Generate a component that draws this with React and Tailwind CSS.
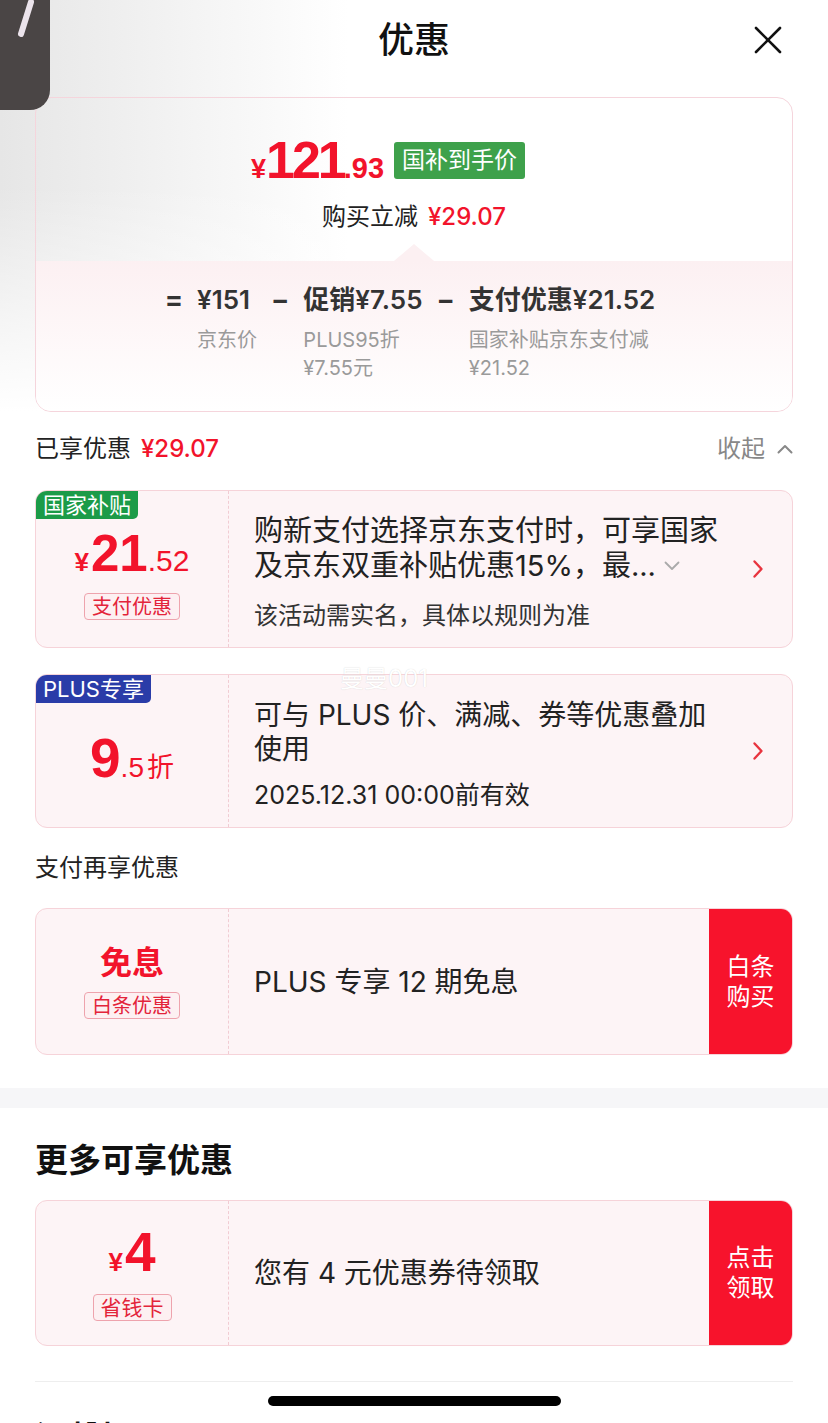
import React from "react";

const RED = "text-[#f2132b]";

function RightChevron() {
  return (
    <svg width="12" height="20" viewBox="0 0 12 20" className="shrink-0">
      <polyline points="2.5,2.5 9.5,10 2.5,17.5" fill="none" stroke="#e8343f" strokeWidth="2.4" strokeLinecap="round" strokeLinejoin="round" />
    </svg>
  );
}

function Tag({ children, className = "" }) {
  return (
    <span className={"inline-flex items-center justify-center h-[27px] px-[7px] rounded-[4px] border border-[#eea3ad] bg-[#fdf0f2] text-[20px] leading-none text-[#e3243a] " + className}>
      {children}
    </span>
  );
}

export default function App() {
  return (
    <div className="relative w-[828px] min-h-[1423px] overflow-hidden bg-white font-['Inter','Noto_Sans_CJK_SC',sans-serif] text-[#1a1a1a]">
      {/* top area with soft gradient */}
      <div className="bg-[linear-gradient(to_bottom,rgba(255,255,255,0)_45%,#ffffff_100%),linear-gradient(to_right,#e6e6e6,#ffffff_42%)]">
        <div className="h-[80px] flex items-center justify-between px-[46px]">
          <div className="w-[28px]" />
          <div className="text-[36px] font-medium leading-none text-[#111]">优惠</div>
          <svg width="28" height="28" viewBox="0 0 28 28">
            <line x1="2" y1="2" x2="26" y2="26" stroke="#111" strokeWidth="2.6" strokeLinecap="round" />
            <line x1="26" y1="2" x2="2" y2="26" stroke="#111" strokeWidth="2.6" strokeLinecap="round" />
          </svg>
        </div>

        {/* summary card */}
        <div className="mx-[35px] mt-[17px] rounded-[16px] border border-[#f5d5dc] overflow-hidden">
          <div className="relative h-[163px] flex flex-col items-center pt-[36px]">
            <div className="flex items-center pr-[52px]">
              <div className={"flex items-baseline font-bold font-['Liberation_Sans',sans-serif] " + RED}>
                <span className="text-[27px] leading-none">¥</span>
                <span className="text-[52px] leading-none tracking-[-3px]">121</span>
                <span className="text-[29px] leading-none">.93</span>
              </div>
              <span className="ml-[10px] h-[37px] px-[8px] rounded-[3px] bg-[#3ea14b] text-white text-[23px] flex items-center leading-none">国补到手价</span>
            </div>
            <div className="mt-[16px] flex items-center gap-[10px] text-[24px] leading-[30px]">
              <span className="text-[#222]">购买立减</span>
              <span className={"font-medium " + RED}>¥29.07</span>
            </div>
            <svg width="40" height="17" viewBox="0 0 40 17" className="absolute bottom-0 left-1/2 -translate-x-1/2">
              <polygon points="0,17 20,0 40,17" fill="#fcf0f2" />
            </svg>
          </div>
          <div className="h-[150px] bg-[linear-gradient(to_bottom,#fcf0f2,#ffffff)] pt-[22px] pr-[8px] flex justify-center items-start gap-[14px] text-[#333]">
            <span className="text-[27px] font-bold leading-[34px]">=</span>
            <div className="flex flex-col">
              <span className="text-[26px] font-semibold leading-[34px]">¥151</span>
              <span className="mt-[9px] text-[20px] leading-[28px] text-[#9a9a9a]">京东价</span>
            </div>
            <span className="text-[27px] font-bold leading-[34px]">−</span>
            <div className="flex flex-col">
              <span className="text-[26px] font-semibold leading-[34px]">促销¥7.55</span>
              <span className="mt-[9px] text-[20px] leading-[28px] text-[#9a9a9a]">PLUS95折</span>
              <span className="text-[20px] leading-[28px] text-[#9a9a9a]">¥7.55元</span>
            </div>
            <span className="text-[27px] font-bold leading-[34px]">−</span>
            <div className="flex flex-col">
              <span className="text-[26px] font-semibold leading-[34px]">支付优惠¥21.52</span>
              <span className="mt-[9px] text-[20px] leading-[28px] text-[#9a9a9a]">国家补贴京东支付减</span>
              <span className="text-[20px] leading-[28px] text-[#9a9a9a]">¥21.52</span>
            </div>
          </div>
        </div>
      </div>

      {/* enjoyed discounts */}
      <div className="mx-[35px] mt-[22px] h-[30px] flex items-center justify-between">
        <div className="flex items-center gap-[10px] text-[24px] leading-[30px]">
          <span className="text-[#222]">已享优惠</span>
          <span className={"font-medium " + RED}>¥29.07</span>
        </div>
        <div className="flex items-center gap-[12px] text-[24px] text-[#888]">
          <span>收起</span>
          <svg width="16" height="10" viewBox="0 0 16 10">
            <polyline points="1.5,8.5 8,2 14.5,8.5" fill="none" stroke="#888" strokeWidth="2" strokeLinecap="round" strokeLinejoin="round" />
          </svg>
        </div>
      </div>

      {/* card 1 */}
      <div className="mx-[35px] mt-[26px] h-[158px] flex rounded-[12px] border border-[#f6d3d9] bg-[#fdf4f6] overflow-hidden">
        <div className="relative w-[193px] shrink-0 border-r border-dashed border-[#f1ccd3] flex flex-col items-center justify-center pt-[10px]">
          <span className="absolute left-0 top-0 h-[28px] px-[7px] bg-[#1c9b48] text-white text-[22px] leading-none flex items-center rounded-br-[5px]">国家补贴</span>
          <div className={"flex items-baseline font-['Liberation_Sans',sans-serif] " + RED}>
            <span className="text-[26px] font-bold leading-none">¥</span>
            <span className="text-[51px] font-bold leading-none ml-[2px]">21</span>
            <span className="text-[30px] leading-none">.52</span>
          </div>
          <Tag className="mt-[14px]">支付优惠</Tag>
        </div>
        <div className="flex-1 flex items-center pl-[25px] pr-[28px]">
          <div className="flex-1 pt-[6px]">
            <div className="text-[29px] leading-[35px] text-[#222] whitespace-nowrap">购新支付选择京东支付时，可享国家</div>
            <div className="text-[29px] leading-[35px] text-[#222] flex items-center whitespace-nowrap">
              <span>及京东双重补贴优惠15%，最...</span>
              <svg width="16" height="10" viewBox="0 0 16 10" className="ml-[8px]">
                <polyline points="1.5,1.5 8,8 14.5,1.5" fill="none" stroke="#aaa" strokeWidth="1.8" strokeLinecap="round" strokeLinejoin="round" />
              </svg>
            </div>
            <div className="mt-[18px] text-[24px] leading-[30px] text-[#333]">该活动需实名，具体以规则为准</div>
          </div>
          <RightChevron />
        </div>
      </div>

      {/* card 2 */}
      <div className="mx-[35px] mt-[26px] h-[154px] flex rounded-[12px] border border-[#f6d3d9] bg-[#fdf4f6] overflow-hidden">
        <div className="relative w-[193px] shrink-0 border-r border-dashed border-[#f1ccd3] flex flex-col items-center justify-center pt-[14px]">
          <span className="absolute left-0 top-0 h-[28px] px-[7px] bg-[#2a3ca8] text-white text-[22px] leading-none flex items-center rounded-br-[5px]">PLUS专享</span>
          <div className={"flex items-baseline " + RED}>
            <span className="text-[55px] font-bold leading-none font-['Liberation_Sans',sans-serif]">9</span>
            <span className="text-[28px] leading-none font-['Liberation_Sans',sans-serif]">.5</span>
            <span className="text-[27px] leading-none ml-[3px]">折</span>
          </div>
        </div>
        <div className="flex-1 flex items-center pl-[25px] pr-[28px]">
          <div className="flex-1 pt-[6px]">
            <div className="text-[28px] leading-[34px] text-[#222] whitespace-nowrap">可与 PLUS 价、满减、券等优惠叠加</div>
            <div className="text-[28px] leading-[34px] text-[#222]">使用</div>
            <div className="mt-[14px] text-[25px] leading-[30px] text-[#222]">2025.12.31 00:00前有效</div>
          </div>
          <RightChevron />
        </div>
      </div>

      <div className="mx-[35px] mt-[25px] text-[24px] leading-[30px] text-[#222]">支付再享优惠</div>

      {/* card 3 */}
      <div className="mx-[35px] mt-[25px] h-[147px] flex rounded-[12px] border border-[#f6d3d9] bg-[#fdf4f6] overflow-hidden">
        <div className="w-[193px] shrink-0 border-r border-dashed border-[#f1ccd3] flex flex-col items-center justify-center">
          <span className={"text-[32px] font-bold leading-[38px] " + RED}>免息</span>
          <Tag className="mt-[10px]">白条优惠</Tag>
        </div>
        <div className="flex-1 flex items-center pl-[25px] text-[28px] text-[#222]">PLUS 专享 12 期免息</div>
        <div className="w-[83px] shrink-0 bg-[#f7132c] flex flex-col items-center justify-center text-white text-[24px] leading-[30px]">
          <span>白条</span>
          <span>购买</span>
        </div>
      </div>

      <div className="mt-[33px] h-[20px] bg-[#f6f6f8]" />

      <div className="mx-[35px] mt-[32px] text-[33px] font-bold leading-[40px] text-[#111]">更多可享优惠</div>

      {/* card 4 */}
      <div className="mx-[35px] mt-[20px] h-[146px] flex rounded-[12px] border border-[#f6d3d9] bg-[#fdf4f6] overflow-hidden">
        <div className="w-[193px] shrink-0 border-r border-dashed border-[#f1ccd3] flex flex-col items-center justify-center">
          <div className={"flex items-baseline font-['Liberation_Sans',sans-serif] " + RED}>
            <span className="text-[26px] font-bold leading-none">¥</span>
            <span className="text-[55px] font-bold leading-none ml-[2px]">4</span>
          </div>
          <Tag className="mt-[14px] text-[21px]">省钱卡</Tag>
        </div>
        <div className="flex-1 flex items-center pl-[25px] text-[28px] text-[#222]">您有 4 元优惠券待领取</div>
        <div className="w-[83px] shrink-0 bg-[#f7132c] flex flex-col items-center justify-center text-white text-[24px] leading-[30px]">
          <span>点击</span>
          <span>领取</span>
        </div>
      </div>

      <div className="mx-[35px] mt-[35px] h-px bg-[#eeeeee]" />

      <div className="mx-[35px] mt-[36px] text-[33px] font-bold leading-[40px] text-[#111]">温馨提示</div>
      <div className="h-[60px]" />

      {/* overlays */}
      <div className="absolute left-0 top-0 w-[50px] h-[110px] bg-[#4a4545] rounded-br-[20px]">
        <svg width="50" height="50" viewBox="0 0 50 50" className="absolute left-0 top-0">
          <line x1="31" y1="2" x2="21" y2="34" stroke="#ece4ec" strokeWidth="6" strokeLinecap="round" />
        </svg>
      </div>
      <div className="absolute left-[340px] top-[664px] text-[24px] leading-[30px] text-white [text-shadow:0_0_1px_rgba(0,0,0,0.18)]">曼曼001</div>
      <div className="absolute left-[268px] top-[1396px] w-[293px] h-[10px] rounded-full bg-black" />
    </div>
  );
}
